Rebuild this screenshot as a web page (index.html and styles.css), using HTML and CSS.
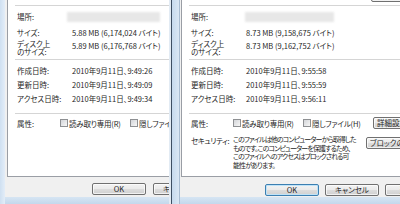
FILE: index.html
```html
<!DOCTYPE html>
<html lang="ja">
<head>
<meta charset="utf-8">
<title>プロパティ</title>
<link rel="stylesheet" href="styles.css">
</head>
<body>
<div class="screen">
  <div class="win win-left">
    <div class="frame-side"></div>
    <div class="win-main">
      <div class="body">
        <div class="panel">
          <div class="top-gap"></div>
          <div class="sep"></div>
          <div class="row row-loc"><div class="lbl">場所:</div><div class="blur"></div></div>
          <div class="row row-size"><div class="lbl">サイズ:</div><div class="val">5.88 MB (6,174,024 バイト)</div></div>
          <div class="row row-disk"><div class="lbl lbl2">ディスク上<br>のサイズ:</div><div class="val">5.89 MB (6,176,768 バイト)</div></div>
          <div class="sep sep-b"></div>
          <div class="dates">
            <div class="row row-date"><div class="lbl">作成日時:</div><div class="val">2010年9月11日、9:49:26</div></div>
            <div class="row row-date"><div class="lbl">更新日時:</div><div class="val">2010年9月11日、9:49:09</div></div>
            <div class="row row-date"><div class="lbl">アクセス日時:</div><div class="val">2010年9月11日、9:49:34</div></div>
          </div>
          <div class="sep sep-c"></div>
          <div class="row row-attr">
            <div class="lbl lbl-s">属性:</div>
            <div class="chk"><span class="box"></span>読み取り専用(R)</div>
            <div class="chk"><span class="box"></span>隠しファイル(H)</div>
          </div>
        </div>
        <div class="buttons buttons-left">
          <div class="btn">OK</div>
          <div class="btn">キャンセル</div>
        </div>
      </div>
      <div class="frame-bottom"></div>
    </div>
  </div>
  <div class="win win-right">
    <div class="glow"></div>
    <div class="edge"></div>
    <div class="frame-side frame-side-r"></div>
    <div class="win-main">
      <div class="body body-r">
        <div class="panel panel-r">
          <div class="top-gap top-gap-r"><div class="btn btn-top"></div></div>
          <div class="sep"></div>
          <div class="row row-loc"><div class="lbl">場所:</div><div class="blur blur-r"></div></div>
          <div class="row row-size"><div class="lbl">サイズ:</div><div class="val">8.73 MB (9,158,675 バイト)</div></div>
          <div class="row row-disk"><div class="lbl lbl2">ディスク上<br>のサイズ:</div><div class="val">8.73 MB (9,162,752 バイト)</div></div>
          <div class="sep sep-b"></div>
          <div class="dates">
            <div class="row row-date"><div class="lbl">作成日時:</div><div class="val">2010年9月11日、9:55:58</div></div>
            <div class="row row-date"><div class="lbl">更新日時:</div><div class="val">2010年9月11日、9:55:59</div></div>
            <div class="row row-date"><div class="lbl">アクセス日時:</div><div class="val">2010年9月11日、9:56:11</div></div>
          </div>
          <div class="sep sep-c"></div>
          <div class="row row-attr">
            <div class="lbl lbl-s">属性:</div>
            <div class="chk"><span class="box"></span>読み取り専用(R)</div>
            <div class="chk"><span class="box"></span>隠しファイル(H)</div>
            <div class="btn btn-adv">詳細設定(D)...</div>
          </div>
          <div class="row row-sec">
            <div class="lbl lbl-s lbl-sec">セキュリティ:</div>
            <div class="sec-text">このファイルは他のコンピューターから取得した<br>ものです。このコンピューターを保護するため、<br>このファイルへのアクセスはブロックされる可<br>能性があります。</div>
            <div class="btn btn-unblock">ブロックの解除(K)</div>
          </div>
        </div>
        <div class="buttons buttons-right">
          <div class="btn btn-default">OK</div>
          <div class="btn">キャンセル</div>
          <div class="btn">適用(A)</div>
        </div>
      </div>
      <div class="frame-bottom"></div>
    </div>
  </div>
</div>
</body>
</html>
```

FILE: styles.css
```css
* { box-sizing: border-box; }
html, body { margin: 0; padding: 0; background: #f0f0f0; }
.screen {
  width: 400px; height: 204px; display: flex; overflow: hidden;
  font-family: "Noto Sans CJK JP", sans-serif; font-size: 7.5px; color: #262626;
  font-feature-settings: "palt";
}
.win { display: flex; overflow: hidden; height: 204px; }
.win-left { width: 169px; flex: none; }
.win-right { flex: 1; min-width: 0; }
.frame-side { width: 5px; flex: none; background: linear-gradient(to right, #cfe0f1, #e3edf8); }
.frame-side-r { width: 8px; background: linear-gradient(to right, #c6daee, #dbe8f5); border-right: 1px solid #a9bdd2; }
.glow { width: 2px; flex: none; background: #e2ebf4; }
.edge { width: 1px; flex: none; background: #3e4f63; }
.win-main { flex: 1; min-width: 0; display: flex; flex-direction: column; }
.body { height: 197px; flex: none; background: #f0f0f0; padding-left: 2px; overflow: hidden; }
.body-r { padding-left: 1px; }
.frame-bottom { flex: 1; background: linear-gradient(#d6e5f3, #c4d8ec); }
.panel {
  height: 177px; background: #fff; border-left: 1px solid #9a9ea5; border-bottom: 1px solid #9a9ea5;
  margin-right: -60px; padding-left: 9px; display: flex; flex-direction: column;
}
.top-gap { height: 5px; }
.top-gap-r { display: flex; }
.sep { height: 1px; background: #d5d5d5; margin-left: -2px; flex: none; }
.sep-b { margin-top: 2px; }
.sep-c { margin-top: 7px; }
.row { display: flex; flex: none; white-space: nowrap; }
.lbl { width: 55px; flex: none; }
.lbl-s { width: 43px; }
.panel-r .lbl-s { width: 42px; }
.row-loc { height: 21px; align-items: center; }
.blur { width: 93px; height: 10px; margin-left: -5px; background: #e7e7e7; filter: blur(1px); }
.blur-r { width: 89px; margin-left: -1px; }
.row-size { height: 11px; line-height: 11px; }
.row-disk { height: 19px; padding-top: 2px; }
.lbl2 { line-height: 8px; }
.row-disk .val { line-height: 11px; }
.dates { padding-top: 4px; }
.row-date { height: 14px; line-height: 14px; }
.row-attr { height: 18px; align-items: center; }
.chk { display: flex; align-items: center; width: 70px; flex: none; letter-spacing: -0.2px; }
.box {
  width: 8px; height: 8px; margin-right: 1px; flex: none; border: 1px solid #8e9093;
  background: linear-gradient(135deg, #d3d5d9, #f7f7f7);
}
.btn {
  width: 54px; height: 12px; flex: none; border: 1px solid #707070; border-radius: 2px;
  background: linear-gradient(#f3f3f3, #ebebeb 45%, #dddddd 50%, #d0d0d0);
  text-align: center; line-height: 10px; white-space: nowrap;
  box-shadow: inset 0 0 0 1px rgba(255,255,255,0.7);
}
.btn-default { border-color: #3c7fb1; box-shadow: inset 0 0 0 1px #bfe3f8; }
.btn-top { margin-left: 180px; margin-top: -10px; height: 12px; }
.btn-adv { width: 60px; text-align: left; padding-left: 3px; }
.row-sec { padding-top: 3px; align-items: flex-start; }
.lbl-sec { letter-spacing: -0.4px; }
.sec-text { font-size: 7px; line-height: 8.6px; letter-spacing: -0.9px; width: 133px; flex: none; }
.btn-unblock { margin-top: 2px; width: 70px; text-align: left; padding-left: 3px; }
.buttons { display: flex; gap: 7px; margin-top: 6px; }
.buttons-left { padding-left: 85px; }
.buttons-right { padding-left: 84px; margin-top: 7px; gap: 6px; }
```
